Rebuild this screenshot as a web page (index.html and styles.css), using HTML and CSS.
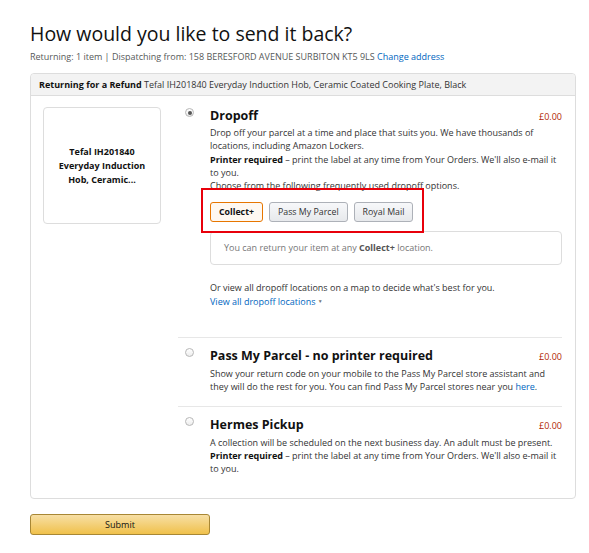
FILE: index.html
```html
<!DOCTYPE html>
<html>
<head>
<meta charset="utf-8">
<link rel="stylesheet" href="styles.css">
</head>
<body>
<div class="page">
  <h1 class="title">How would you like to send it back?</h1>
  <p class="sub">Returning: 1 item | Dispatching from: 158 BERESFORD AVENUE SURBITON KT5 9LS <a class="link">Change address</a></p>

  <div class="box">
    <div class="box-head"><b>Returning for a Refund</b> Tefal IH201840 Everyday Induction Hob, Ceramic Coated Cooking Plate, Black</div>
    <div class="box-body">
      <div class="product">Tefal IH201840 Everyday Induction Hob, Ceramic...</div>
      <div class="options">
        <div class="option first">
          <span class="radio checked"></span>
          <div class="opt-main">
            <div class="opt-head"><span class="opt-title">Dropoff</span><span class="price">£0.00</span></div>
            <p class="desc">Drop off your parcel at a time and place that suits you. We have thousands of locations, including Amazon Lockers.<br><b>Printer required</b> – print the label at any time from Your Orders. We'll also e-mail it to you.<br>Choose from the following frequently used dropoff options.</p>
            <div class="btns">
              <span class="btn active">Collect+</span>
              <span class="btn">Pass My Parcel</span>
              <span class="btn">Royal Mail</span>
              <span class="annot"></span>
            </div>
            <div class="info">You can return your item at any <b>Collect+</b> location.</div>
            <p class="desc more">Or view all dropoff locations on a map to decide what's best for you.<br><a class="link">View all dropoff locations <span class="caret">▼</span></a></p>
          </div>
        </div>
        <div class="option">
          <span class="radio"></span>
          <div class="opt-main">
            <div class="opt-head"><span class="opt-title">Pass My Parcel - no printer required</span><span class="price">£0.00</span></div>
            <p class="desc">Show your return code on your mobile to the Pass My Parcel store assistant and they will do the rest for you. You can find Pass My Parcel stores near you <a class="link">here</a>.</p>
          </div>
        </div>
        <div class="option last">
          <span class="radio"></span>
          <div class="opt-main">
            <div class="opt-head"><span class="opt-title">Hermes Pickup</span><span class="price">£0.00</span></div>
            <p class="desc">A collection will be scheduled on the next business day. An adult must be present.<br><b>Printer required</b> – print the label at any time from Your Orders. We'll also e-mail it to you.</p>
          </div>
        </div>
      </div>
    </div>
  </div>

  <button class="submit">Submit</button>
</div>
</body>
</html>
```

FILE: styles.css
```css
* { box-sizing: border-box; }
html, body { margin: 0; padding: 0; background: #fff; }
body {
  font-family: "Open Sans", "Noto Sans", sans-serif;
  color: #111;
  font-size: 9px;
}
.page { padding: 19px 14px 0 30px; }
.title {
  margin: 0;
  font-size: 19.5px;
  font-weight: 400;
  line-height: 30px;
  color: #111;
}
.sub {
  margin: 1px 0 0;
  font-size: 9px;
  line-height: 14px;
  color: #565959;
}
.link { color: #0066c0; text-decoration: none; }
.box {
  margin-top: 9px;
  border: 1px solid #ddd;
  border-radius: 4px;
  width: 546px;
}
.box-head {
  background: #f3f3f3;
  border-bottom: 1px solid #ddd;
  border-radius: 4px 4px 0 0;
  height: 22px;
  line-height: 21px;
  padding-left: 8px;
  font-size: 9px;
  color: #333;
}
.box-head b { color: #111; }
.box-body {
  display: flex;
  padding: 11px 13px 0 12px;
}
.product {
  flex: 0 0 118px;
  height: 117px;
  border: 1px solid #ddd;
  border-radius: 4px;
  display: flex;
  align-items: center;
  justify-content: center;
  text-align: center;
  font-weight: 700;
  font-size: 9px;
  line-height: 14px;
  padding: 0 12px;
  color: #111;
}
.options { flex: 1; margin-left: 17px; }
.option {
  display: flex;
  border-bottom: 1px solid #e7e7e7;
  padding: 9px 0 12px 0;
}
.option.first { padding-top: 0; padding-bottom: 29px; }
.option.last { border-bottom: 0; padding-bottom: 22px; }
.radio {
  flex: 0 0 9px;
  width: 9px;
  height: 9px;
  margin: 1px 0 0 7px;
  border: 1px solid #b7b7b7;
  border-radius: 50%;
  background: linear-gradient(#fff, #ededed);
  position: relative;
}
.radio.checked::after {
  content: "";
  position: absolute;
  left: 1.5px; top: 1.5px;
  width: 4px; height: 4px;
  border-radius: 50%;
  background: #555;
}
.opt-main { flex: 1; margin-left: 16px; }
.opt-head {
  display: flex;
  justify-content: space-between;
  align-items: baseline;
  line-height: 17px;
}
.opt-title { font-size: 12.5px; font-weight: 700; color: #111; }
.price { font-size: 9px; color: #b12704; }
.desc {
  margin: 2px 0 0;
  font-size: 9px;
  line-height: 13.3px;
  color: #333;
}
.first .desc { margin-top: 1px; }
.desc b { color: #111; }
.btns {
  position: relative;
  display: flex;
  gap: 6px;
  margin-top: 10px;
  width: max-content;
}
.btn {
  height: 20px;
  line-height: 18px;
  border: 1px solid #adb1b8;
  border-radius: 3px;
  background: linear-gradient(#f7f8fa, #e7e9ec);
  padding: 0 8px;
  font-size: 8.8px;
  color: #333;
}
.btn.active {
  border-color: #e77600;
  background: #fef8f1;
  font-weight: 700;
  color: #111;
}
.annot {
  position: absolute;
  left: -9px; top: -14px; right: -11px; bottom: -11px;
  border: 2px solid #e8000b;
  pointer-events: none;
}
.info {
  margin-top: 9px;
  height: 34px;
  border: 1px solid #ddd;
  border-radius: 4px;
  line-height: 32px;
  padding-left: 13px;
  font-size: 9px;
  color: #767676;
}
.info b { color: #555; }
.first .desc.more { margin-top: 16px; }
.caret { font-size: 5px; vertical-align: 2px; color: #767676; }
.submit {
  display: block;
  margin-top: 15px;
  width: 180px;
  height: 21px;
  border: 1px solid #a88734;
  border-radius: 3px;
  background: linear-gradient(#f7dfa5, #f0c14b);
  font-family: "Open Sans", "Noto Sans", sans-serif;
  font-size: 9px;
  color: #111;
  padding: 0;
}
```
